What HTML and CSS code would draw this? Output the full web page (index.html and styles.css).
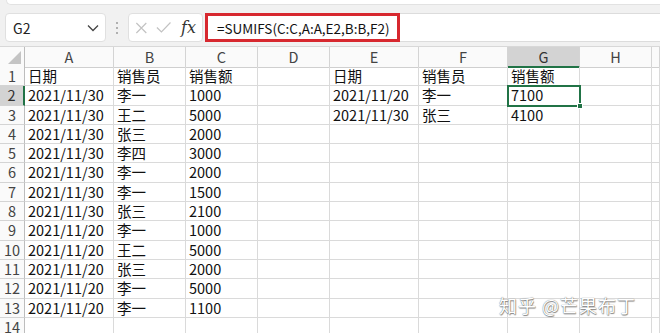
FILE: index.html
```html
<!DOCTYPE html>
<html lang="zh">
<head>
<meta charset="utf-8">
<link rel="stylesheet" href="styles.css">
</head>
<body>
<div class="app">
  <div class="toolbar">
    <div class="strip"></div>
    <div class="bar">
      <div class="namebox"><span class="ref">G2</span>
        <svg class="chev" width="12" height="8" viewBox="0 0 12 8"><path d="M1 1.5 L6 6.5 L11 1.5" fill="none" stroke="#444" stroke-width="1.3"/></svg>
      </div>
      <div class="dots"><i></i><i></i><i></i></div>
      <div class="fxbox">
        <svg width="14" height="14" viewBox="0 0 14 14"><path d="M1.5 1.5 L12.5 12.5 M12.5 1.5 L1.5 12.5" stroke="#c2c2c2" stroke-width="1.3"/></svg>
        <svg width="17" height="13" viewBox="0 0 17 13"><path d="M1 6.5 L6 11.5 L16 1" fill="none" stroke="#c2c2c2" stroke-width="1.3"/></svg>
        <span class="fx">fx</span>
      </div>
      <div class="formula">
        <div class="redbox">=SUMIFS(C:C,A:A,E2,B:B,F2)</div>
      </div>
    </div>
  </div>

  <div class="sheet">
    <div class="row head">
      <div class="c corner"><svg width="13" height="13" viewBox="0 0 13 13"><path d="M13 0 L13 13 L0 13 Z" fill="#c4c4c4"/></svg></div>
      <div class="c">A</div><div class="c">B</div><div class="c">C</div><div class="c">D</div><div class="c">E</div><div class="c">F</div><div class="c sel-h">G</div><div class="c">H</div><div class="c"></div>
    </div>
    <div class="row"><div class="c n">1</div><div class="c">日期</div><div class="c">销售员</div><div class="c">销售额</div><div class="c"></div><div class="c">日期</div><div class="c">销售员</div><div class="c">销售额</div><div class="c"></div><div class="c"></div></div>
    <div class="row"><div class="c n sel-n">2</div><div class="c">2021/11/30</div><div class="c">李一</div><div class="c">1000</div><div class="c"></div><div class="c">2021/11/20</div><div class="c">李一</div><div class="c active">7100<span class="handle"></span></div><div class="c"></div><div class="c"></div></div>
    <div class="row"><div class="c n">3</div><div class="c">2021/11/30</div><div class="c">王二</div><div class="c">5000</div><div class="c"></div><div class="c">2021/11/30</div><div class="c">张三</div><div class="c">4100</div><div class="c"></div><div class="c"></div></div>
    <div class="row"><div class="c n">4</div><div class="c">2021/11/30</div><div class="c">张三</div><div class="c">2000</div><div class="c"></div><div class="c"></div><div class="c"></div><div class="c"></div><div class="c"></div><div class="c"></div></div>
    <div class="row"><div class="c n">5</div><div class="c">2021/11/30</div><div class="c">李四</div><div class="c">3000</div><div class="c"></div><div class="c"></div><div class="c"></div><div class="c"></div><div class="c"></div><div class="c"></div></div>
    <div class="row"><div class="c n">6</div><div class="c">2021/11/30</div><div class="c">李一</div><div class="c">2000</div><div class="c"></div><div class="c"></div><div class="c"></div><div class="c"></div><div class="c"></div><div class="c"></div></div>
    <div class="row"><div class="c n">7</div><div class="c">2021/11/30</div><div class="c">李一</div><div class="c">1500</div><div class="c"></div><div class="c"></div><div class="c"></div><div class="c"></div><div class="c"></div><div class="c"></div></div>
    <div class="row"><div class="c n">8</div><div class="c">2021/11/30</div><div class="c">张三</div><div class="c">2100</div><div class="c"></div><div class="c"></div><div class="c"></div><div class="c"></div><div class="c"></div><div class="c"></div></div>
    <div class="row"><div class="c n">9</div><div class="c">2021/11/20</div><div class="c">李一</div><div class="c">1000</div><div class="c"></div><div class="c"></div><div class="c"></div><div class="c"></div><div class="c"></div><div class="c"></div></div>
    <div class="row"><div class="c n">10</div><div class="c">2021/11/20</div><div class="c">王二</div><div class="c">5000</div><div class="c"></div><div class="c"></div><div class="c"></div><div class="c"></div><div class="c"></div><div class="c"></div></div>
    <div class="row"><div class="c n">11</div><div class="c">2021/11/20</div><div class="c">张三</div><div class="c">2000</div><div class="c"></div><div class="c"></div><div class="c"></div><div class="c"></div><div class="c"></div><div class="c"></div></div>
    <div class="row"><div class="c n">12</div><div class="c">2021/11/20</div><div class="c">李一</div><div class="c">5000</div><div class="c"></div><div class="c"></div><div class="c"></div><div class="c"></div><div class="c"></div><div class="c"></div></div>
    <div class="row"><div class="c n">13</div><div class="c">2021/11/20</div><div class="c">李一</div><div class="c">1100</div><div class="c"></div><div class="c"></div><div class="c"></div><div class="c"></div><div class="c"></div><div class="c"></div></div>
    <div class="row"><div class="c n">14</div><div class="c"></div><div class="c"></div><div class="c"></div><div class="c"></div><div class="c"></div><div class="c"></div><div class="c"></div><div class="c"></div><div class="c"></div></div>
  </div>
  <div class="watermark">知乎 @芒果布丁</div>
</div>
</body>
</html>
```

FILE: styles.css
```css
* { box-sizing: border-box; }
html, body { margin: 0; padding: 0; }
body {
  width: 660px;
  height: 333px;
  overflow: hidden;
  background: #fff;
  font-family: "Noto Sans CJK SC", "Noto Sans", sans-serif;
  color: #111;
}
.app { position: relative; width: 660px; height: 333px; overflow: hidden; }

.toolbar {
  background: #f1f1f1;
  height: 47px;
  border-bottom: 1px solid #d8d8d8;
}
.strip {
  height: 5px;
  margin-left: 6px;
  background: #fff;
  border-bottom: 1px solid #e2e2e2;
  border-left: 1px solid #e2e2e2;
  border-bottom-left-radius: 6px;
}
.bar {
  display: flex;
  margin-top: 8px;
  height: 29px;
}
.namebox {
  margin-left: 5px;
  width: 101px;
  background: #fff;
  border: 1px solid #e0e0e0;
  border-radius: 4px;
  display: flex;
  align-items: center;
  justify-content: space-between;
  padding: 0 6px 0 7px;
  font-size: 14px;
  color: #222;
}
.chev { margin-top: 1px; }
.dots {
  width: 22px;
  display: flex;
  flex-direction: column;
  align-items: center;
  justify-content: center;
  gap: 3px;
}
.dots i {
  display: block;
  width: 2px;
  height: 2px;
  background: #9a9a9a;
  border-radius: 1px;
}
.fxbox {
  width: 75px;
  background: #fff;
  border: 1px solid #e0e0e0;
  border-radius: 4px;
  display: flex;
  align-items: center;
  padding: 0 6px 0 6px;
  gap: 8px;
}
.fx {
  font-family: "DejaVu Serif", "Liberation Serif", serif;
  font-style: italic;
  font-size: 16px;
  color: #333;
  margin-left: 2px;
}
.formula {
  flex: 1;
  margin-left: 2px;
  background: #fff;
  border-top: 1px solid #dcdcdc;
  border-bottom: 1px solid #dcdcdc;
  display: flex;
}
.redbox {
  width: 195px;
  margin: -1px 0;
  border: 3px solid #d7282f;
  font-size: 13.5px;
  display: flex;
  align-items: center;
  padding-left: 9px;
  color: #111;
}

.sheet { display: flex; flex-direction: column; }
.row {
  display: grid;
  grid-template-columns: 25px 89px 72px 72px 72px 89px 89px 72px 72px 1fr;
  height: 19.3px;
  flex: none;
}
.row.head { height: 20px; }
.c {
  border-right: 1px solid #dadada;
  border-bottom: 1px solid #dadada;
  font-size: 14.5px;
  line-height: 18px;
  padding-left: 3px;
  white-space: nowrap;
  position: relative;
}
.head .c {
  background: #fafafa;
  text-align: center;
  padding-left: 0;
  color: #444;
  border-bottom: 1px solid #cfcfcf;
  border-right-color: #d4d4d4;
  line-height: 19px;
}
.head .corner {
  display: flex;
  align-items: flex-end;
  justify-content: flex-end;
  padding: 0 3px 3px 0;
  border-right: 1px solid #bdbdbd;
}
.c.n {
  background: #fafafa;
  text-align: center;
  padding-left: 0;
  color: #444;
  border-right: 1px solid #bdbdbd;
  border-bottom-color: #d4d4d4;
}
.head .sel-h {
  background: #d3d3d3;
  border-bottom: 2px solid #217346;
  color: #333;
}
.c.sel-n {
  background: #d3d3d3;
  border-right: 2px solid #217346;
  color: #333;
}
.c.active {
  outline: 2px solid #217346;
  outline-offset: -1px;
  z-index: 2;
}
.handle {
  position: absolute;
  right: -4px;
  bottom: -4px;
  width: 6px;
  height: 6px;
  background: #217346;
  border: 1px solid #fff;
}

.watermark {
  position: absolute;
  left: 499px;
  top: 292px;
  font-size: 18px;
  color: #fff;
  text-shadow: 0 0 1px #555, 0.5px 0.5px 1px #888;
  letter-spacing: 1px;
}
```
